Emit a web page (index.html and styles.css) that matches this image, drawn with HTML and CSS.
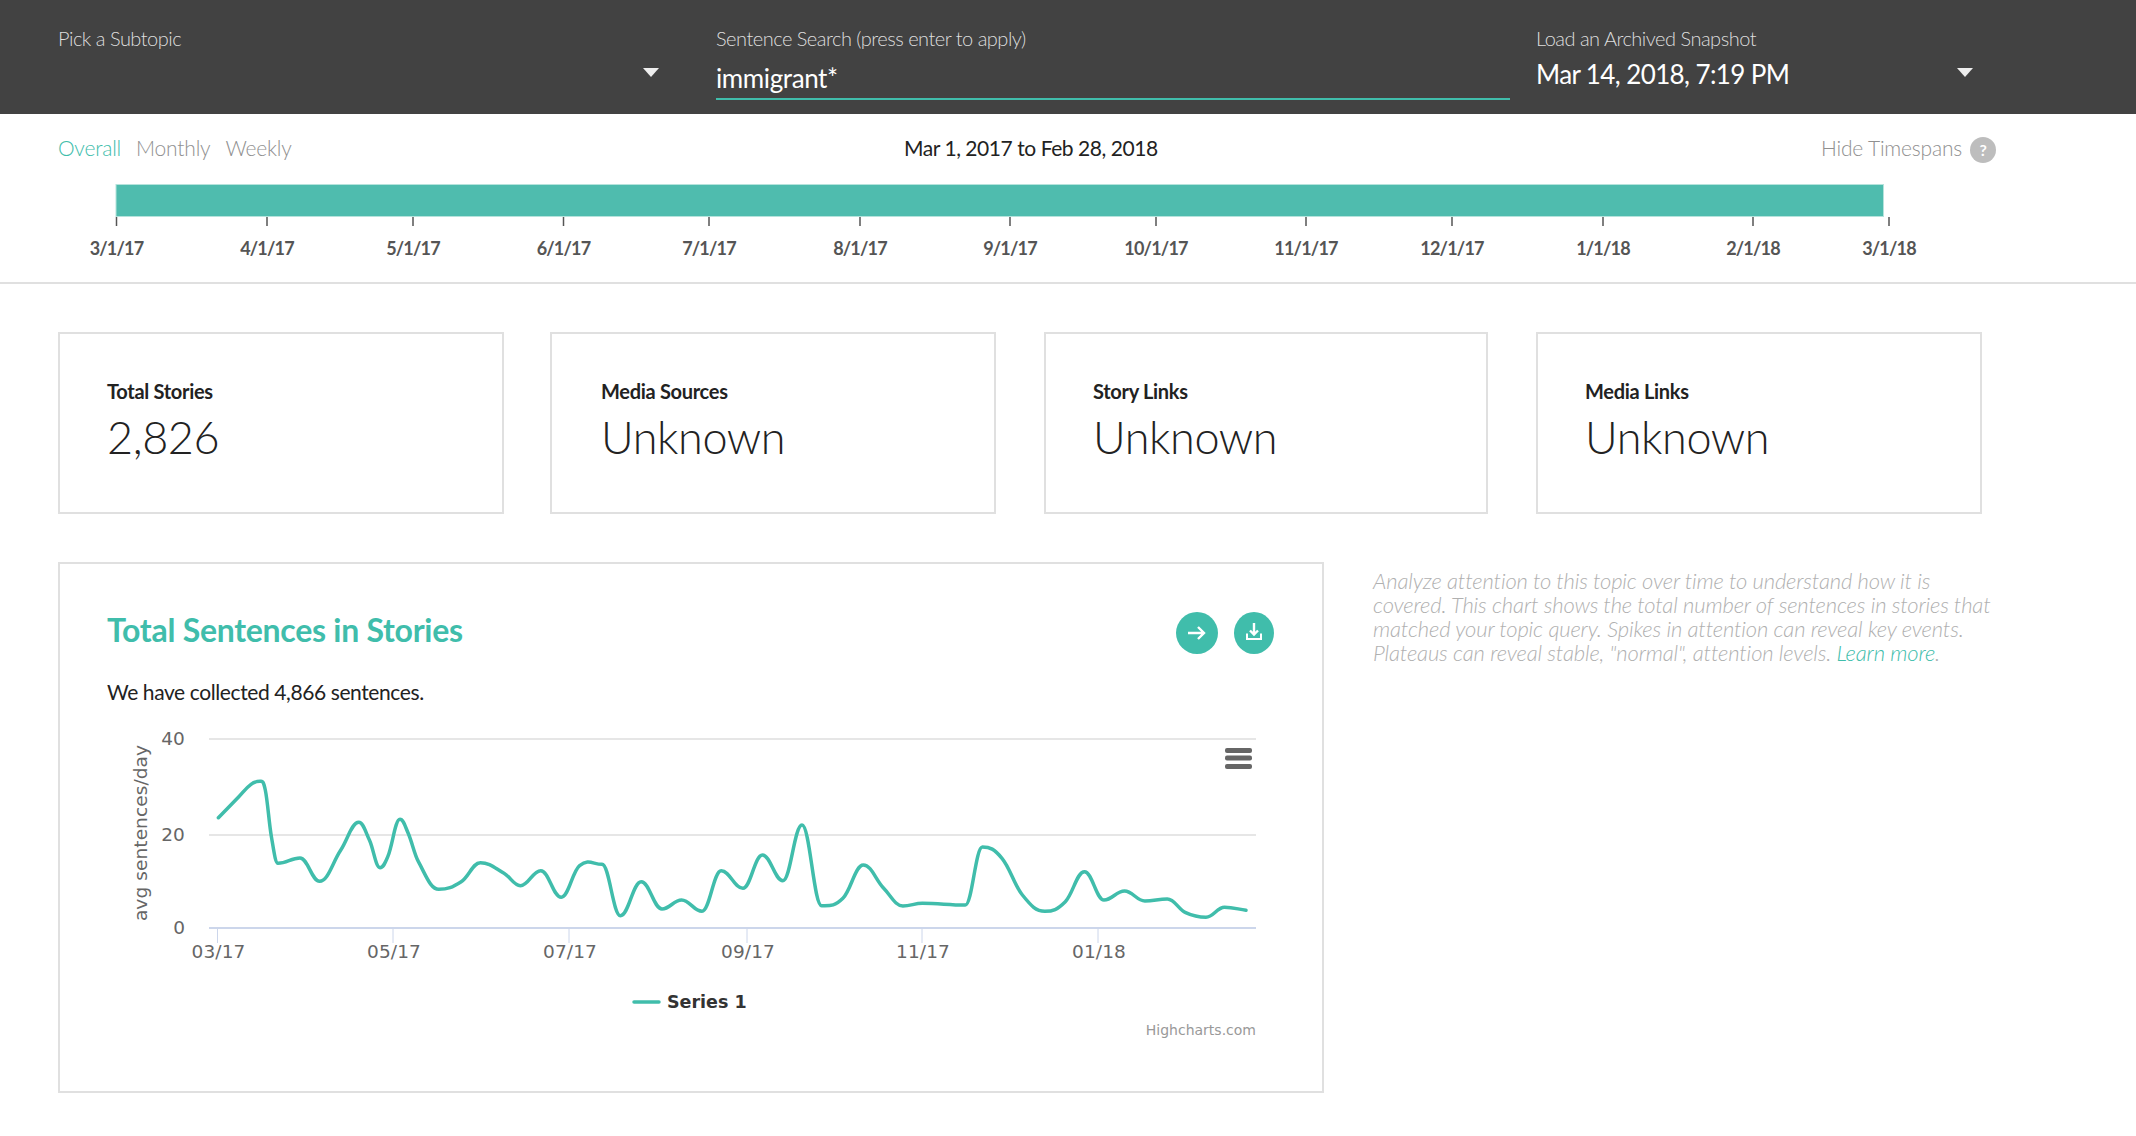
FILE: index.html
```html
<!DOCTYPE html>
<html lang="en">
<head>
    <meta charset="UTF-8">
    <title>Topic Summary</title>
    <link rel="stylesheet" href="styles.css">
</head>
<body>
    <!-- Filters -->
    <header class="filters">
        <div class="field field-subtopic">
            <label class="field-label">Pick a Subtopic</label>
            <span class="caret"></span>
        </div>
        <div class="field field-search">
            <label class="field-label">Sentence Search (press enter to apply)</label>
            <div class="search-value">immigrant*</div>
        </div>
        <div class="field field-snapshot">
            <label class="field-label">Load an Archived Snapshot</label>
            <div class="snapshot-value">Mar 14, 2018, 7:19 PM</div>
            <span class="caret"></span>
        </div>
    </header>

    <!-- Timespans -->
    <section class="timespans">
        <div class="timespan-bar">
            <nav class="timespan-tabs">
                <a class="tab tab-active">Overall</a>
                <a class="tab">Monthly</a>
                <a class="tab">Weekly</a>
            </nav>
            <div class="timespan-range">Mar 1, 2017 to Feb 28, 2018</div>
            <div class="timespan-hide">Hide Timespans <span class="help-badge">?</span></div>
        </div>
        <svg class="timeline" width="1924" height="90" viewBox="58 178 1924 90">
            <rect class="timeline-fill" x="116" y="184.5" width="1767.5" height="32"/>
            <g id="timelineTicks"></g>
        </svg>
    </section>

    <main class="content">
        <div class="stats">
            <div class="stat">
                <div class="stat-label">Total Stories</div>
                <div class="stat-value">2,826</div>
            </div>
            <div class="stat">
                <div class="stat-label">Media Sources</div>
                <div class="stat-value">Unknown</div>
            </div>
            <div class="stat">
                <div class="stat-label">Story Links</div>
                <div class="stat-value">Unknown</div>
            </div>
            <div class="stat">
                <div class="stat-label">Media Links</div>
                <div class="stat-value">Unknown</div>
            </div>
        </div>

        <div class="attention">
            <div class="chart-card">
                <div class="chart-head">
                    <h2>Total Sentences in Stories</h2>
                    <div class="chart-actions">
                        <button class="round-btn round-btn-next">
                            <svg width="18" height="18" viewBox="0 0 18 18"><path d="M0 9h15.500M10 3l6 6-6 6" fill="none" stroke="#fff" stroke-width="2.400"/></svg>
                        </button>
                        <button class="round-btn">
                            <svg width="20" height="20" viewBox="0 0 20 20"><path d="M10 0v11.500M6 7.500l4 4 4-4" fill="none" stroke="#fff" stroke-width="2.400"/><path d="M3 10.500V16h14v-5.500" fill="none" stroke="#fff" stroke-width="2"/></svg>
                        </button>
                    </div>
                </div>
                <p class="chart-summary">We have collected 4,866 sentences.</p>
                <svg class="chart" width="1167" height="340" viewBox="107 720 1167 340">
                    <line class="grid" x1="209" y1="739" x2="1256" y2="739"/>
                    <line class="grid" x1="209" y1="835" x2="1256" y2="835"/>
                    <line class="axis" x1="209" y1="928" x2="1256" y2="928"/>
                    <g id="chartTicks"></g>
                    <text class="chart-text" x="185" y="745" text-anchor="end">40</text>
                    <text class="chart-text" x="185" y="841" text-anchor="end">20</text>
                    <text class="chart-text" x="185" y="934" text-anchor="end">0</text>
                    <text class="chart-text" transform="translate(147 833) rotate(-90)" text-anchor="middle">avg sentences/day</text>
                    <path id="chartLine" class="series"/>
                    <g class="chart-menu">
                        <rect x="1225" y="748" width="27" height="5" rx="2"/>
                        <rect x="1225" y="755.500" width="27" height="5" rx="2"/>
                        <rect x="1225" y="764" width="27" height="5" rx="2"/>
                    </g>
                    <line class="series" x1="634" y1="1002" x2="659" y2="1002"/>
                    <text class="legend-text" x="667" y="1008">Series 1</text>
                    <text class="credits" x="1256" y="1035" text-anchor="end">Highcharts.com</text>
                </svg>
            </div>
            <aside class="chart-help">
                Analyze attention to this topic over time to understand how it is<br>
                covered. This chart shows the total number of sentences in stories that<br>
                matched your topic query. Spikes in attention can reveal key events.<br>
                Plateaus can reveal stable, "normal", attention levels. <a class="learn-more">Learn more</a>.
            </aside>
        </div>
    </main>

    <script src="chart.js"></script>
</body>
</html>
```

FILE: styles.css
```css
* {
    box-sizing: border-box;
}
body {
    margin: 0;
    font-family: Lato, sans-serif;
    font-weight: 300;
    color: #222;
    background-color: #fff;
}
/* Filters */
.filters {
    display: flex;
    height: 114px;
    padding-left: 58px;
    background-color: #424242;
}
.field {
    position: relative;
    padding-top: 26px;
}
.field-subtopic {
    width: 601px;
    margin-right: 57px;
}
.field-search {
    width: 794px;
    margin-right: 26px;
}
.field-snapshot {
    width: 437px;
}
.field-label {
    display: block;
    font-size: 20px;
    line-height: 24px;
    letter-spacing: -0.5px;
    color: #dedede;
}
.search-value {
    height: 50px;
    padding-top: 10px;
    border-bottom: 2px solid #40bdab;
    font-size: 26px;
    line-height: 36px;
    font-weight: 400;
    letter-spacing: -0.4px;
    color: #fff;
}
.snapshot-value {
    padding-top: 6px;
    font-size: 26px;
    line-height: 36px;
    font-weight: 400;
    letter-spacing: -0.6px;
    color: #fff;
}
.caret {
    position: absolute;
    top: 68px;
    right: 0;
    border-left: 8px solid transparent;
    border-right: 8px solid transparent;
    border-top: 9px solid #eee;
}
/* Timespans */
.timespans {
    height: 170px;
    padding: 18px 0 0 58px;
    border-bottom: 2px solid #e0e0e0;
}
.timespan-bar {
    display: flex;
    align-items: center;
    width: 1938px;
    height: 30px;
    margin-bottom: 16px;
    font-size: 21px;
    letter-spacing: -0.5px;
}
.timespan-tabs {
    display: flex;
    gap: 15px;
    width: 846px;
    letter-spacing: -0.2px;
}
.tab {
    color: #909090;
}
.tab-active {
    color: #40bdab;
}
.timespan-range {
    width: 917px;
    font-weight: 400;
    letter-spacing: -0.45px;
    color: #222;
}
.timespan-hide {
    display: flex;
    align-items: center;
    gap: 8px;
    letter-spacing: -0.2px;
    color: #909090;
}
.help-badge {
    width: 26px;
    height: 26px;
    margin-top: 5px;
    border-radius: 50%;
    background-color: #bdbdbd;
    color: #fff;
    font-size: 16px;
    font-weight: 700;
    line-height: 26px;
    text-align: center;
}
.timeline {
    display: block;
}
.timeline-fill {
    fill: #4fbcae;
    stroke: #b5e3dc;
    stroke-width: 1;
}
.timeline-tick {
    stroke: #555;
    stroke-width: 1.500;
}
.timeline-label {
    font-family: Lato, sans-serif;
    font-size: 18px;
    font-weight: 700;
    letter-spacing: -0.8px;
    fill: #555;
}
/* Stats */
.content {
    padding: 48px 0 0 58px;
}
.stats {
    display: grid;
    grid-template-columns: 446px 444px 444px 446px;
    gap: 48px;
    margin-bottom: 48px;
}
.stat {
    height: 182px;
    padding: 44px 47px 0;
    border: 2px solid #e0e0e0;
}
/* second card sits 2px closer to the first */
.stat:nth-child(2) {
    margin-left: -2px;
    padding-left: 49px;
}
.stat-label {
    font-size: 20px;
    line-height: 26px;
    font-weight: 700;
    letter-spacing: -0.3px;
    color: #222;
}
.stat-value {
    padding-top: 1px;
    font-size: 45px;
    line-height: 64px;
    font-weight: 300;
    letter-spacing: -0.4px;
    color: #222;
}
/* Chart */
.attention {
    display: flex;
    gap: 49px;
}
.chart-card {
    width: 1266px;
    height: 531px;
    padding: 43px 48px 0 47px;
    border: 2px solid #e0e0e0;
}
.chart-head {
    display: flex;
    justify-content: space-between;
    align-items: center;
    height: 44px;
}
.chart-head h2 {
    margin: 0;
    font-size: 32px;
    font-weight: 700;
    letter-spacing: -0.27px;
    color: #40bdab;
}
.chart-actions {
    display: flex;
    gap: 16px;
    margin-top: 7px;
}
.round-btn {
    display: flex;
    align-items: center;
    justify-content: center;
    width: 40px;
    height: 42px;
    padding: 0;
    border: none;
    border-radius: 50%;
    background-color: #40bdab;
}
.round-btn-next {
    width: 42px;
}
.chart-summary {
    height: 42px;
    margin: 0;
    padding-top: 27px;
    font-size: 21px;
    line-height: 28px;
    font-weight: 400;
    letter-spacing: -0.4px;
    color: #222;
    box-sizing: content-box;
}
.chart {
    display: block;
}
.grid {
    stroke: #e6e6e6;
    stroke-width: 2;
}
.axis {
    stroke: #ccd6eb;
    stroke-width: 2;
}
.chart-tick {
    stroke: #ccd6eb;
    stroke-width: 1;
}
.series {
    fill: none;
    stroke: #40bdab;
    stroke-width: 3.500;
    stroke-linecap: round;
    stroke-linejoin: round;
}
.chart-text {
    font-family: "DejaVu Sans", sans-serif;
    font-size: 18.500px;
    font-weight: 400;
    letter-spacing: 0.1px;
    fill: #666;
}
.legend-text {
    font-family: "DejaVu Sans", sans-serif;
    font-size: 17.500px;
    font-weight: 700;
    fill: #333;
}
.credits {
    font-family: "DejaVu Sans", sans-serif;
    font-size: 14px;
    font-weight: 400;
    fill: #999;
}
.chart-menu rect {
    fill: #666;
}
.chart-help {
    padding-top: 7px;
    font-size: 22px;
    line-height: 24px;
    font-style: italic;
    letter-spacing: -0.15px;
    white-space: nowrap;
    color: #b0b0b0;
}
.learn-more {
    color: #40bdab;
}
```

FILE: chart.js
```js
const SVG_NS = "http://www.w3.org/2000/svg";

function addSvg(parent, name, attrs, text) {
    const el = document.createElementNS(SVG_NS, name);
    Object.keys(attrs).forEach(key => el.setAttribute(key, attrs[key]));
    if (text) el.textContent = text;
    parent.appendChild(el);
}

// Timeline ticks
const timelineDates = [
    [116.5, "3/1/17"], [267, "4/1/17"], [413, "5/1/17"], [563.5, "6/1/17"], [709, "7/1/17"],
    [860, "8/1/17"], [1010, "9/1/17"], [1156, "10/1/17"], [1306, "11/1/17"], [1452, "12/1/17"],
    [1603, "1/1/18"], [1753, "2/1/18"], [1889, "3/1/18"]
];
const timelineTicks = document.getElementById("timelineTicks");
timelineDates.forEach(d => {
    addSvg(timelineTicks, "line", { class: "timeline-tick", x1: d[0], y1: 217, x2: d[0], y2: 226 });
    addSvg(timelineTicks, "text", { class: "timeline-label", x: d[0], y: 255, "text-anchor": "middle" }, d[1]);
});

// Chart month ticks
const chartMonths = [
    [217.5, "03/17"], [393, "05/17"], [569, "07/17"], [747, "09/17"], [922, "11/17"], [1098, "01/18"]
];
const chartTicks = document.getElementById("chartTicks");
chartMonths.forEach(m => {
    addSvg(chartTicks, "line", { class: "chart-tick", x1: m[0], y1: 928, x2: m[0], y2: 943 });
    addSvg(chartTicks, "text", { class: "chart-text", x: m[0] + 1, y: 958, "text-anchor": "middle" }, m[1]);
});

// Series points as drawn on the page
const points = [
    [218.4, 817.7], [238.8, 796.7], [251, 784.3], [260, 781.3], [265.3, 790], [271.4, 836.7],
    [278, 863.3], [300, 858], [319.6, 881.3], [340.8, 850], [358.8, 822.3], [369.4, 840],
    [380, 867.7], [387.8, 856.7], [400, 819.3], [408.2, 833.3], [418.4, 861.7], [438.8, 889.3],
    [461.2, 881.7], [480.4, 862.7], [504, 873.3], [520.4, 885.7], [540.8, 870.7], [561.2, 897.3],
    [579.6, 865.7], [602, 864.3], [620.4, 915.7], [641.2, 881.7], [662, 909], [681.6, 900],
    [702, 911.3], [721.2, 870.7], [742.9, 888.3], [762.4, 855], [782.9, 880.7], [802, 825],
    [821.6, 905.7], [842.9, 898.3], [863.3, 865], [883.7, 888.3], [902.9, 906], [922.4, 903.3],
    [965.3, 905], [982.4, 847], [1002, 858.3], [1022.4, 895], [1044.9, 911.3], [1065.3, 901.7],
    [1084.5, 871.7], [1104, 900], [1124.5, 891], [1144.9, 901], [1167.3, 899], [1185.7, 912.7],
    [1206, 917.3], [1224.5, 907.3], [1246, 910.3]
];

// Slope at each point, flat on peaks and dips
function slopeAt(i) {
    const last = points.length - 1;
    if (i === 0) return (points[1][1] - points[0][1]) / (points[1][0] - points[0][0]);
    if (i === last) return (points[last][1] - points[last - 1][1]) / (points[last][0] - points[last - 1][0]);
    const a = points[i - 1], b = points[i], c = points[i + 1];
    if ((b[1] - a[1]) * (c[1] - b[1]) <= 0) return 0;
    return (c[1] - a[1]) / (c[0] - a[0]);
}

let d = "M" + points[0][0] + " " + points[0][1];
for (let i = 0; i < points.length - 1; i++) {
    const p = points[i], q = points[i + 1];
    const dx = (q[0] - p[0]) * 0.4;
    d += " C" + (p[0] + dx) + " " + (p[1] + slopeAt(i) * dx) + " " +
        (q[0] - dx) + " " + (q[1] - slopeAt(i + 1) * dx) + " " + q[0] + " " + q[1];
}
document.getElementById("chartLine").setAttribute("d", d);
```
